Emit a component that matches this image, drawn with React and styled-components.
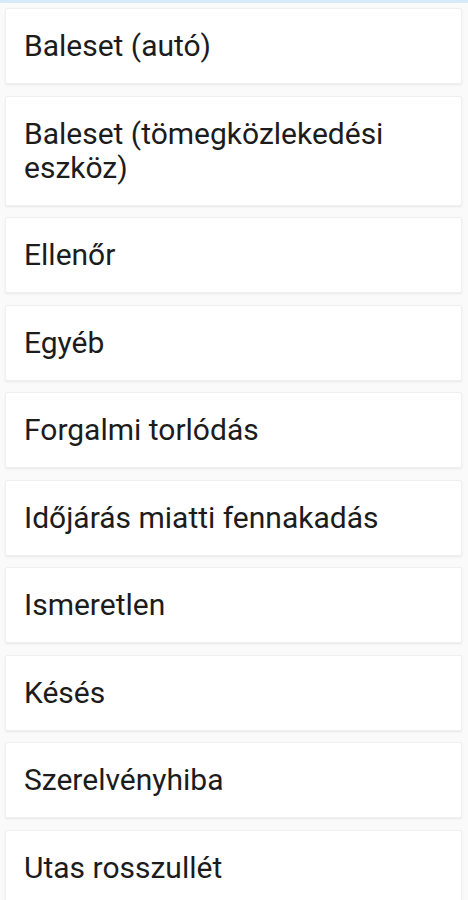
import React from 'react';
import styled, { createGlobalStyle } from 'styled-components';

const GlobalStyle = createGlobalStyle`
  html, body {
    margin: 0;
    padding: 0;
    background: #fafafa;
    font-family: Roboto, "Noto Sans", sans-serif;
  }
`;

const Screen = styled.div`
  width: 468px;
  height: 900px;
  overflow: hidden;
  background: #fafafa;
  border-top: 3px solid #d6ebf7;
  box-sizing: border-box;
`;

const List = styled.ul`
  list-style: none;
  margin: 0;
  padding: 5px 6px 0 5px;
  display: flex;
  flex-direction: column;
  gap: 11.5px;
`;

const Card = styled.li`
  background: #ffffff;
  border: 1px solid #f0f0f0;
  border-radius: 2px;
  box-shadow: 0 1px 2px rgba(0, 0, 0, 0.08);
  padding: 20px 18px;
  font-size: 30px;
  line-height: 34px;
  color: #1c1c1c;
`;

const reasons = [
  'Baleset (autó)',
  'Baleset (tömegközlekedési eszköz)',
  'Ellenőr',
  'Egyéb',
  'Forgalmi torlódás',
  'Időjárás miatti fennakadás',
  'Ismeretlen',
  'Késés',
  'Szerelvényhiba',
  'Utas rosszullét',
];

export default function App() {
  return (
    <Screen>
      <GlobalStyle />
      <List>
        {reasons.map(r => (
          <Card key={r}>{r}</Card>
        ))}
      </List>
    </Screen>
  );
}
